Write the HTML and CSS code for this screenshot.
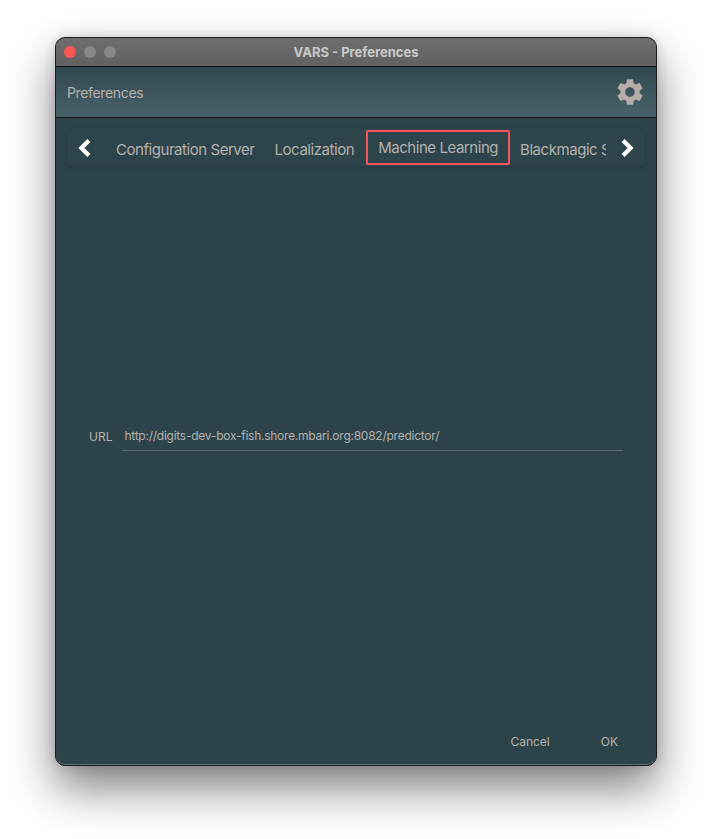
FILE: index.html
```html
<!DOCTYPE html>
<html lang="en">
<head>
<meta charset="utf-8">
<title>VARS - Preferences</title>
<link rel="stylesheet" href="styles.css">
</head>
<body>
<div class="window">
  <div class="titlebar">
    <div class="lights">
      <span class="light light-close"></span>
      <span class="light"></span>
      <span class="light"></span>
    </div>
    <div class="title">VARS - Preferences</div>
  </div>
  <div class="header">
    <div class="header-label">Preferences</div>
    <svg class="gear" viewBox="0 0 24 24" aria-hidden="true"><path d="M19.14 12.94c.04-.3.06-.61.06-.94 0-.32-.02-.64-.07-.94l2.03-1.58a.49.49 0 0 0 .12-.61l-1.92-3.32a.488.488 0 0 0-.59-.22l-2.39.96c-.5-.38-1.03-.7-1.62-.94l-.36-2.54a.484.484 0 0 0-.48-.41h-3.84c-.24 0-.43.17-.47.41l-.36 2.54c-.59.24-1.13.57-1.62.94l-2.39-.96c-.22-.08-.47 0-.59.22L2.74 8.87c-.12.21-.08.47.12.61l2.03 1.58c-.05.3-.09.63-.09.94s.02.64.07.94l-2.03 1.58a.49.49 0 0 0-.12.61l1.92 3.32c.12.22.37.29.59.22l2.39-.96c.5.38 1.03.7 1.62.94l.36 2.54c.05.24.24.41.48.41h3.84c.24 0 .44-.17.47-.41l.36-2.54c.59-.24 1.13-.56 1.62-.94l2.39.96c.22.08.47 0 .59-.22l1.92-3.32c.12-.22.07-.47-.12-.61l-2.01-1.58zM12 15.6c-1.98 0-3.6-1.62-3.6-3.6s1.62-3.6 3.6-3.6 3.6 1.62 3.6 3.6-1.62 3.6-3.6 3.6z"/></svg>
  </div>
  <div class="content">
    <div class="tabbar">
      <div class="arrow arrow-left">
        <svg viewBox="0 0 12 16" aria-hidden="true"><path d="M9.5 2 L3.5 8 L9.5 14"/></svg>
      </div>
      <div class="tabs">
        <div class="tab">Configuration Server</div>
        <div class="tab">Localization</div>
        <div class="tab tab-selected">Machine Learning</div>
        <div class="tab">Blackmagic SDI</div>
      </div>
      <div class="arrow arrow-right">
        <svg viewBox="0 0 12 16" aria-hidden="true"><path d="M2.5 2 L8.5 8 L2.5 14"/></svg>
      </div>
    </div>
    <div class="form">
      <div class="field">
        <label class="field-label">URL</label>
        <div class="field-input">http://digits-dev-box-fish.shore.mbari.org:8082/predictor/</div>
      </div>
    </div>
    <div class="buttons">
      <div class="btn btn-cancel">Cancel</div>
      <div class="btn btn-ok">OK</div>
    </div>
  </div>
</div>
</body>
</html>
```

FILE: styles.css
```css
* { box-sizing: border-box; }
html, body { margin: 0; padding: 0; height: 839px; overflow: hidden; background: #fff; }
body { padding: 37px 55px 0; font-family: Inter, "Noto Sans", sans-serif; color: #b4b1ae; }

.window {
  width: 602px;
  height: 729px;
  display: flex;
  flex-direction: column;
  border: 1px solid #1c1c1c;
  border-radius: 10px;
  overflow: hidden;
  background: #2c4349;
  box-shadow: inset 0 -1px 0 #5f6f75, 0 22px 45px rgba(0, 0, 0, .5), 0 0 12px rgba(0, 0, 0, .14);
}

.titlebar {
  height: 29px;
  flex: none;
  display: flex;
  align-items: center;
  position: relative;
  background: linear-gradient(#6e6e6e, #616161);
  border-bottom: 1px solid #111;
}
.lights { display: flex; gap: 8px; padding-left: 8px; }
.light { width: 12px; height: 12px; border-radius: 50%; background: #868686; }
.light-close { background: #fd5553; }
.title {
  position: absolute;
  left: 0; right: 0;
  text-align: center;
  font-size: 13px;
  font-weight: 700;
  color: #c9c9c9;
}

.header {
  height: 51px;
  flex: none;
  display: flex;
  align-items: center;
  justify-content: space-between;
  padding: 0 10px 0 11px;
  background: linear-gradient(#30474f, #4a6269);
  border-bottom: 1px solid #111;
}
.header-label { font-size: 14px; letter-spacing: -.35px; }
.gear { width: 32px; height: 32px; fill: #b5aca8; display: block; }

.content { flex: 1; display: flex; flex-direction: column; min-height: 0; }

.tabbar {
  margin: 11px 11px 0 11px;
  width: 578px;
  height: 37px;
  flex: none;
  display: flex;
  align-items: center;
  background: #2e444b;
  box-shadow: 0 1px 4px rgba(0, 0, 0, .18);
}
.arrow { flex: none; display: flex; justify-content: center; }
.arrow svg { width: 15px; height: 20px; fill: none; stroke: #fff; stroke-width: 3.4; display: block; }
.arrow-left { width: 34px; margin-right: 5px; }
.arrow-right { width: 39px; padding-left: 3px; }

.tabs {
  flex: 1;
  min-width: 0;
  display: flex;
  overflow: hidden;
  align-items: center;
  height: 37px;
  font-size: 15px;
  letter-spacing: -.45px;
  white-space: nowrap;
}
.tab { padding: 4px 10px 0; flex: none; line-height: 34px; height: 37px; }
.tab-selected {
  height: 35px;
  padding: 0 10px;
  margin: 0 0 1px 2px;
  line-height: 31px;
  border: 2px solid #f9515e;
  border-radius: 2px;
}

.form { flex: 1; display: flex; align-items: center; padding: 0 33px 0 33px; margin-top: -8px; }
.field { flex: 1; display: flex; align-items: center; gap: 10px; }
.field-label { font-size: 12px; margin-bottom: 2px; }
.field-input {
  flex: 1;
  height: 27px;
  padding: 4px 2px 0;
  font-size: 12px;
  line-height: 16px;
  letter-spacing: -.25px;
  border-bottom: 1px solid #59676d;
}

.buttons { flex: none; display: flex; justify-content: flex-end; align-items: center; height: 48px; padding: 0 38px 0 0; gap: 51px; font-size: 12px; }
```
